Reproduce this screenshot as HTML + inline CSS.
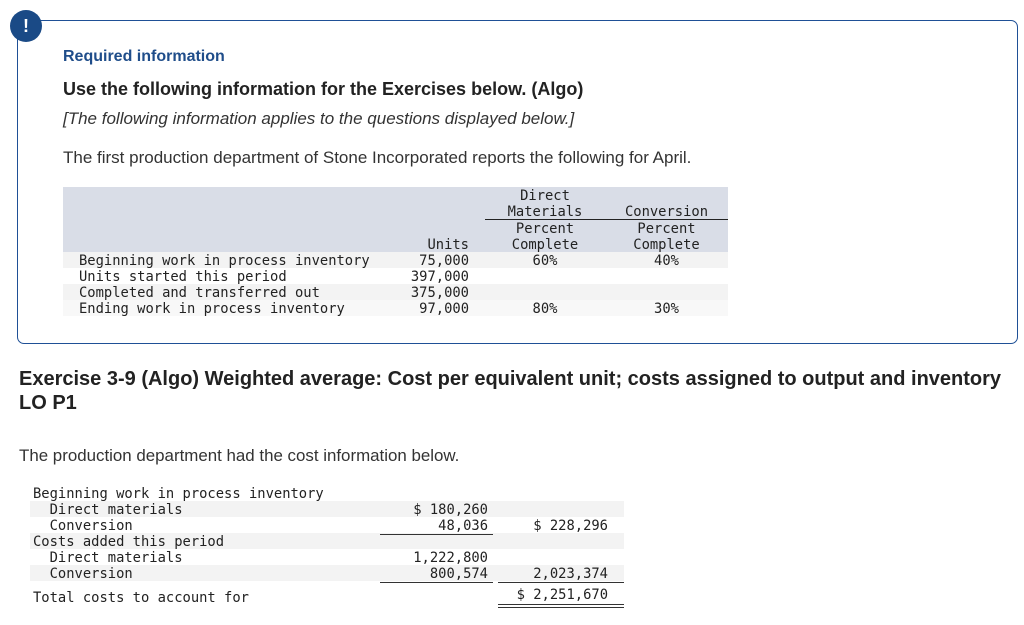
<!DOCTYPE html>
<html><head><meta charset="utf-8"><style>
*{margin:0;padding:0;box-sizing:border-box}
body{width:1024px;height:625px;background:#fff;position:relative;font-family:"Liberation Sans",sans-serif;color:#222;overflow:hidden}
.a{position:absolute;white-space:nowrap}
.m{font-family:"DejaVu Sans Mono","Liberation Mono",monospace;font-size:13.8px;line-height:16px;color:#222}
.box{position:absolute;left:17px;top:20px;width:1001px;height:324px;border:1.5px solid #1f5096;border-radius:7px}
.ic{position:absolute;left:10px;top:10px;width:32px;height:32px;border-radius:50%;background:#1a4a86;color:#fff;font-weight:bold;font-size:18px;text-align:center;line-height:32px}
.r{text-align:right}.c{text-align:center}
</style></head><body>
<div class="box"></div>
<div class="ic">!</div>
<div class="a" style="left:63px;top:48px;font-size:16px;font-weight:bold;color:#1f4d8a">Required information</div>
<div class="a" style="left:63px;top:79px;font-size:18px;font-weight:bold">Use the following information for the Exercises below. (Algo)</div>
<div class="a" style="left:63px;top:109px;font-size:17px;font-style:italic;color:#333">[The following information applies to the questions displayed below.]</div>
<div class="a" style="left:63px;top:148px;font-size:17px;color:#333">The first production department of Stone Incorporated reports the following for April.</div>

<div class="a" style="left:63px;top:187px;width:665px;height:65px;background:#d9dde7"></div>
<div class="a" style="left:63px;top:252px;width:665px;height:16px;background:#f3f3f3"></div>
<div class="a" style="left:63px;top:284px;width:665px;height:16px;background:#f3f3f3"></div>
<div class="a" style="left:63px;top:300px;width:665px;height:16px;background:#f8f8f8"></div>
<div class="a" style="left:485px;top:219px;width:243px;height:1px;background:#222"></div>
<div class="a m c" style="left:485px;top:188px;width:120px">Direct<br>Materials</div>
<div class="a m c" style="left:485px;top:221px;width:120px">Percent<br>Complete<br>60%</div>
<div class="a m c" style="left:605px;top:204px;width:123px">Conversion</div>
<div class="a m c" style="left:605px;top:221px;width:123px">Percent<br>Complete<br>40%</div>
<div class="a m r" style="left:400px;top:237px;width:69px">Units<br>75,000<br>397,000<br>375,000<br>97,000</div>
<div class="a m" style="left:79px;top:253px">Beginning work in process inventory<br>Units started this period<br>Completed and transferred out<br>Ending work in process inventory</div>
<div class="a m c" style="left:485px;top:301px;width:120px">80%</div>
<div class="a m c" style="left:605px;top:301px;width:123px">30%</div>

<div class="a" style="left:19px;top:367px;font-size:20px;font-weight:bold;line-height:24px;color:#222">Exercise 3-9 (Algo) Weighted average: Cost per equivalent unit; costs assigned to output and inventory<br>LO P1</div>
<div class="a" style="left:19px;top:446px;font-size:16.9px;color:#333">The production department had the cost information below.</div>

<div class="a" style="left:30px;top:501px;width:594px;height:16px;background:#f3f3f3"></div>
<div class="a" style="left:30px;top:533px;width:594px;height:16px;background:#f3f3f3"></div>
<div class="a" style="left:30px;top:565px;width:594px;height:16px;background:#f3f3f3"></div>
<div class="a m" style="left:33px;top:486px">Beginning work in process inventory<br>&nbsp;&nbsp;Direct materials<br>&nbsp;&nbsp;Conversion<br>Costs added this period<br>&nbsp;&nbsp;Direct materials<br>&nbsp;&nbsp;Conversion</div>
<div class="a m" style="left:33px;top:590px">Total costs to account for</div>
<div class="a m r" style="left:380px;top:502px;width:108px">$ 180,260<br>48,036</div>
<div class="a" style="left:380px;top:534px;width:113px;height:1px;background:#333"></div>
<div class="a m r" style="left:380px;top:550px;width:108px">1,222,800<br>800,574</div>
<div class="a" style="left:380px;top:582px;width:113px;height:1px;background:#333"></div>
<div class="a m r" style="left:500px;top:518px;width:108px">$ 228,296</div>
<div class="a m r" style="left:500px;top:566px;width:108px">2,023,374</div>
<div class="a" style="left:498px;top:582px;width:126px;height:1px;background:#333"></div>
<div class="a m r" style="left:500px;top:587px;width:108px">$ 2,251,670</div>
<div class="a" style="left:498px;top:604px;width:126px;height:1px;background:#333"></div>
<div class="a" style="left:498px;top:607px;width:126px;height:1px;background:#333"></div>
</body></html>
